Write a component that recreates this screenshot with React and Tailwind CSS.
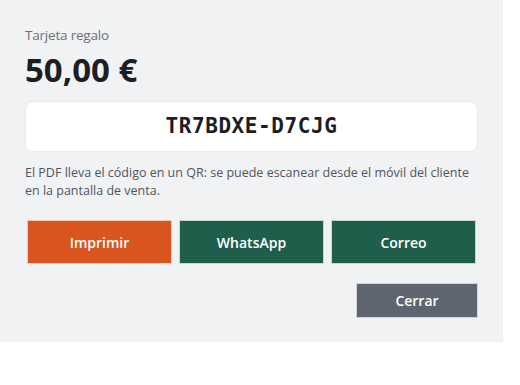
export default function App() {
  return (
    <div className="w-[520px] h-[385px] bg-white" style={{ fontFamily: '"Open Sans", "Noto Sans", sans-serif' }}>
      <div className="w-[503px] bg-[#f1f2f4] px-[25px] pt-[25px] pb-[24px]">
        <div className="text-[13.5px] leading-[20px] tracking-[-0.2px] text-[#6b7078]">Tarjeta regalo</div>
        <div className="mt-[5px] text-[33px] leading-[40px] font-bold text-[#1c1e22]">50,00 €</div>

        <div className="mt-[11px] h-[51px] rounded-[8px] bg-white border border-[#e8eaed] flex items-center justify-center">
          <span
            className="text-[21px] font-bold tracking-[0.6px] text-[#1c1e22]"
            style={{ fontFamily: '"DejaVu Sans Mono", "Liberation Mono", monospace' }}
          >
            TR7BDXE-D7CJG
          </span>
        </div>

        <p className="mt-[12px] text-[12.5px] leading-[18px] text-[#50555d]">
          El PDF lleva el código en un QR: se puede escanear desde el móvil del cliente en la pantalla de venta.
        </p>

        <div className="mt-[20px] px-[2px] flex gap-[7px]">
          <button className="flex-1 h-[44px] bg-[#d9541e] border border-[#f0c8b4] text-white text-[14px] font-semibold">
            Imprimir
          </button>
          <button className="flex-1 h-[44px] bg-[#1f5e4b] border border-[#c7d6d0] text-white text-[14px] font-semibold">
            WhatsApp
          </button>
          <button className="flex-1 h-[44px] bg-[#1f5e4b] border border-[#c7d6d0] text-white text-[14px] font-semibold">
            Correo
          </button>
        </div>

        <div className="mt-[19px] flex justify-end">
          <button className="w-[122px] h-[35px] bg-[#5f6570] border border-[#d0d3d8] text-white text-[14px] font-semibold">
            Cerrar
          </button>
        </div>
      </div>
    </div>
  )
}
